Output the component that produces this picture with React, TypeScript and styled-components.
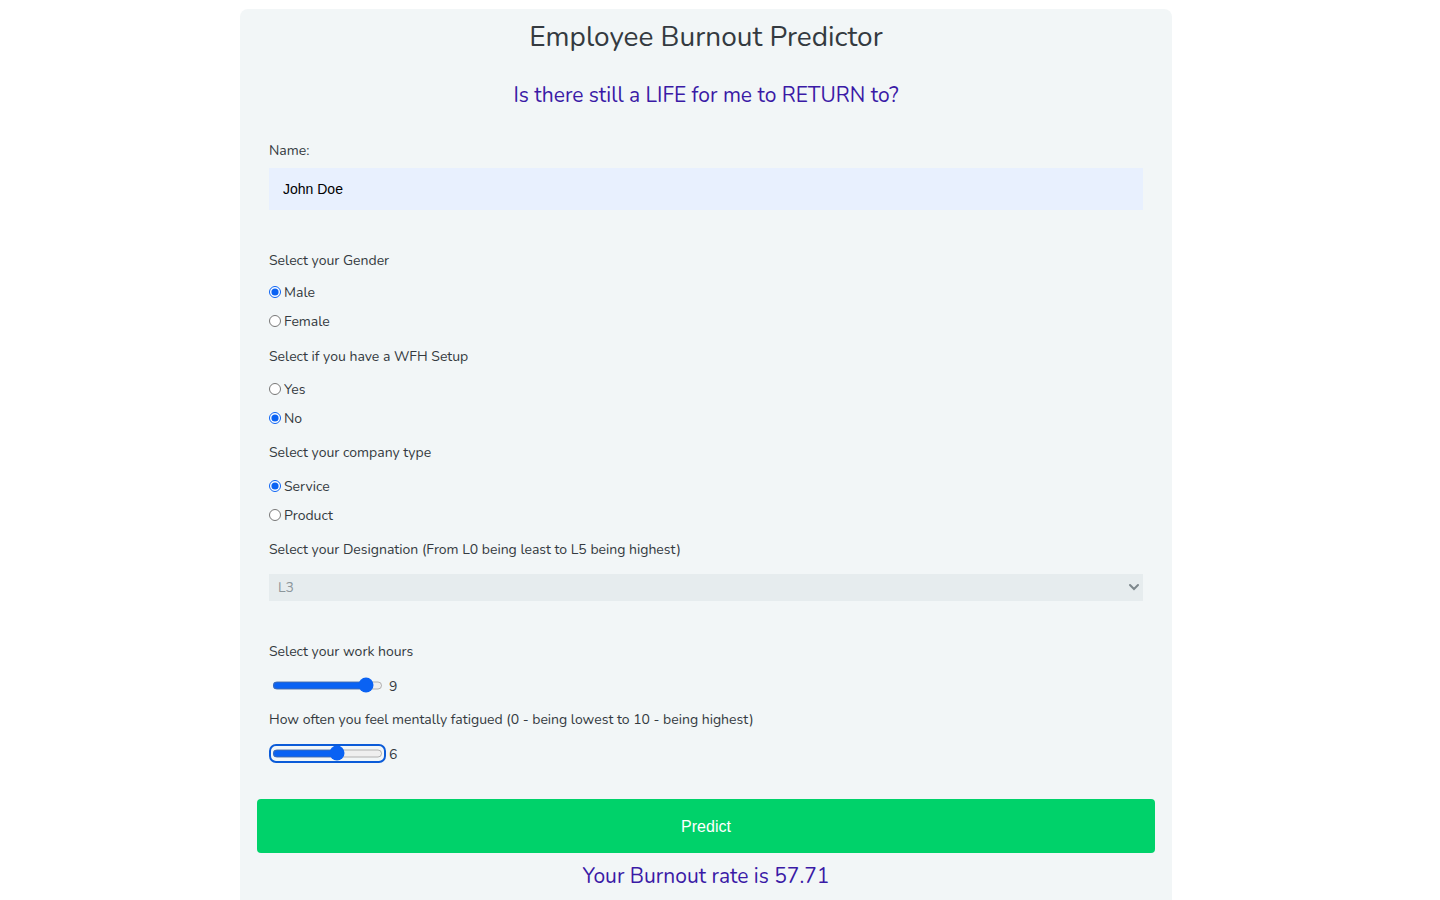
import React from "react";
import styled, { createGlobalStyle } from "styled-components";

const GlobalStyle = createGlobalStyle`
  html, body {
    margin: 0;
    padding: 0;
    background: #ffffff;
  }
  body {
    font-family: Nunito, Lato, "Open Sans", sans-serif;
    color: #343a40;
  }
  * { box-sizing: border-box; }
`;

const Page = styled.div`
  display: flex;
  padding: 9px 0 0 240px;
  min-height: 900px;
`;

const Card = styled.main`
  width: 932px;
  min-height: 920px;
  background: #f2f6f7;
  border-radius: 8px 8px 0 0;
  padding: 10px 17px 20px;
  display: flex;
  flex-direction: column;
`;

const Title = styled.h1`
  margin: 0;
  font-size: 28px;
  line-height: 37px;
  font-weight: 400;
  text-align: center;
  color: #343a40;
`;

const Subtitle = styled.h2<{ $top: number }>`
  margin: ${(p) => p.$top}px 0 0;
  font-size: 21px;
  line-height: 28px;
  font-weight: 400;
  text-align: center;
  color: #3a1aa6;
`;

const Form = styled.form`
  display: flex;
  flex-direction: column;
  padding: 0 12px;
  margin-top: 31px;
`;

const Label = styled.label<{ $top: number }>`
  display: block;
  margin-top: ${(p) => p.$top}px;
  font-size: 14px;
  line-height: 22px;
  color: #343a40;
`;

const TextInput = styled.input`
  margin-top: 6px;
  height: 42px;
  width: 100%;
  border: none;
  outline: none;
  background: #e8f0fe;
  padding: 0 14px;
  font-family: "Liberation Sans", Arial, sans-serif;
  font-size: 14px;
  color: #000;
`;

const RadioRow = styled.label<{ $top: number }>`
  display: flex;
  align-items: center;
  height: 20px;
  margin-top: ${(p) => p.$top}px;
  font-size: 14px;
  color: #343a40;
`;

const Radio = styled.input`
  width: 12px;
  height: 12px;
  margin: 0 3px 0 0;
  accent-color: #0a62f3;
`;

const SelectWrap = styled.div`
  position: relative;
  margin-top: 13px;
  height: 27px;
`;

const Select = styled.select`
  appearance: none;
  -webkit-appearance: none;
  width: 100%;
  height: 27px;
  border: none;
  outline: none;
  background: #e6ecee;
  padding: 0 9px;
  font-family: Nunito, Lato, "Open Sans", sans-serif;
  font-size: 14px;
  color: #8c969b;
`;

const Chevron = styled.svg`
  position: absolute;
  right: 3px;
  top: 8px;
  pointer-events: none;
`;

const SliderRow = styled.div<{ $top: number }>`
  display: flex;
  align-items: center;
  height: 20px;
  margin-top: ${(p) => p.$top}px;
  font-size: 14px;
  color: #343a40;
`;

const Range = styled.input<{ $focused?: boolean }>`
  width: 111px;
  height: 13px;
  margin: 0 6px 0 3px;
  accent-color: #0a62f3;
  border-radius: 4px;
  outline: ${(p) => (p.$focused ? "2px solid #0b5bd8" : "none")};
  outline-offset: 1px;
`;

const Value = styled.span`
  padding-top: 3px;
`;

const PredictButton = styled.button`
  margin-top: 36px;
  height: 54px;
  width: 100%;
  border: none;
  border-radius: 4px;
  padding-top: 2px;
  background: #00d26a;
  color: #ffffff;
  font-family: "Liberation Sans", Arial, sans-serif;
  font-size: 16px;
  cursor: pointer;
`;

export default function App() {
  return (
    <>
      <GlobalStyle />
      <Page>
        <Card>
          <Title>Employee Burnout Predictor</Title>
          <Subtitle $top={25}>Is there still a LIFE for me to RETURN to?</Subtitle>
          <Form onSubmit={(e) => e.preventDefault()}>
            <Label $top={0} htmlFor="name">Name:</Label>
            <TextInput id="name" defaultValue="John Doe" />

            <Label $top={40}>Select your Gender</Label>
            <RadioRow $top={10}>
              <Radio type="radio" name="gender" defaultChecked />
              Male
            </RadioRow>
            <RadioRow $top={9}>
              <Radio type="radio" name="gender" />
              Female
            </RadioRow>

            <Label $top={15}>Select if you have a WFH Setup</Label>
            <RadioRow $top={11}>
              <Radio type="radio" name="wfh" />
              Yes
            </RadioRow>
            <RadioRow $top={9}>
              <Radio type="radio" name="wfh" defaultChecked />
              No
            </RadioRow>

            <Label $top={14}>Select your company type</Label>
            <RadioRow $top={12}>
              <Radio type="radio" name="company" defaultChecked />
              Service
            </RadioRow>
            <RadioRow $top={9}>
              <Radio type="radio" name="company" />
              Product
            </RadioRow>

            <Label $top={14}>Select your Designation (From L0 being least to L5 being highest)</Label>
            <SelectWrap>
              <Select defaultValue="L3">
                <option>L0</option>
                <option>L1</option>
                <option>L2</option>
                <option>L3</option>
                <option>L4</option>
                <option>L5</option>
              </Select>
              <Chevron width="12" height="10" viewBox="0 0 12 10">
                <path d="M2 3 L6 7 L10 3" fill="none" stroke="#7d878c" strokeWidth="2" strokeLinecap="round" />
              </Chevron>
            </SelectWrap>

            <Label $top={40}>Select your work hours</Label>
            <SliderRow $top={12}>
              <Range type="range" min={0} max={10} defaultValue={9} />
              <Value>9</Value>
            </SliderRow>

            <Label $top={14}>How often you feel mentally fatigued (0 - being lowest to 10 - being highest)</Label>
            <SliderRow $top={12}>
              <Range type="range" min={0} max={10} defaultValue={6} $focused />
              <Value>6</Value>
            </SliderRow>
          </Form>
          <PredictButton type="button">Predict</PredictButton>
          <Subtitle $top={9}>Your Burnout rate is 57.71</Subtitle>
        </Card>
      </Page>
    </>
  );
}
